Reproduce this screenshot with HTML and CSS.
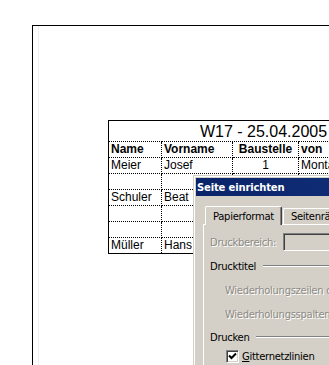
FILE: index.html
```html
<!DOCTYPE html>
<html lang="de">
<head>
  <meta charset="UTF-8">
  <title>Seite einrichten</title>
  <link rel="stylesheet" href="styles.css">
</head>
<body>
  <div class="sheet">
    <div class="sheet-inner">
      <table class="plan">
        <colgroup>
          <col class="c-name">
          <col class="c-vorname">
          <col class="c-baustelle">
          <col class="c-von">
        </colgroup>
        <tr class="title">
          <td colspan="4">W17 - 25.04.2005</td>
        </tr>
        <tr class="head">
          <td>Name</td>
          <td>Vorname</td>
          <td class="num">Baustelle</td>
          <td>von</td>
        </tr>
        <tr>
          <td>Meier</td>
          <td>Josef</td>
          <td class="num">1</td>
          <td>Montag</td>
        </tr>
        <tr><td></td><td></td><td></td><td></td></tr>
        <tr>
          <td>Schuler</td>
          <td>Beat</td>
          <td></td>
          <td></td>
        </tr>
        <tr><td></td><td></td><td></td><td></td></tr>
        <tr><td></td><td></td><td></td><td></td></tr>
        <tr>
          <td>Müller</td>
          <td>Hans</td>
          <td></td>
          <td></td>
        </tr>
      </table>
    </div>
  </div>

  <div class="dialog">
    <div class="titlebar">Seite einrichten</div>
    <div class="dlg-body">
      <div class="tabs">
        <div class="tab active">Papierformat</div>
        <div class="tab">Seitenränder</div>
      </div>
      <div class="panel">
        <div class="field">
          <span class="field-label disabled">Druckbereich:</span>
          <span class="textbox"></span>
        </div>
        <div class="group">
          <span>Drucktitel</span>
          <span class="rule"></span>
        </div>
        <div class="field option">
          <span class="disabled">Wiederholungszeilen oben:</span>
        </div>
        <div class="field option">
          <span class="disabled">Wiederholungsspalten links:</span>
        </div>
        <div class="group short">
          <span>Drucken</span>
          <span class="rule"></span>
        </div>
        <div class="check-row">
          <span class="checkbox">
            <svg width="9" height="9" viewBox="0 0 9 9">
              <polyline points="1,3.5 3.5,6 8,1.5" fill="none" stroke="#000" stroke-width="2"/>
            </svg>
          </span>
          <span class="check-label"><u>G</u>itternetzlinien</span>
        </div>
      </div>
    </div>
  </div>
</body>
</html>
```

FILE: styles.css
```css
body {
  margin: 0;
  background-color: #fff;
  overflow: hidden;
  font-family: "Liberation Sans", Arial, sans-serif;
  color: #000;
}

/* Blattrand der Druckvorschau */
.sheet {
  margin: 25px 0 0 32px;
  border-top: 1px solid #000;
  border-left: 1px solid #000;
  height: 360px;
}

.sheet-inner {
  margin-left: 5px;
  border-left: 1px solid #efefef;
  height: 100%;
  padding: 94px 0 0 69px;
  box-sizing: border-box;
}

.plan {
  border-collapse: collapse;
  table-layout: fixed;
  width: 310px;
  border: 1px solid #000;
  font-size: 12px;
}

.c-name { width: 53px; }
.c-vorname { width: 71px; }
.c-baustelle { width: 66px; }
.c-von { width: 120px; }

.plan td {
  border: 1px dotted #000;
  height: 15px;
  padding: 0 2px;
  line-height: 15px;
  white-space: nowrap;
  overflow: hidden;
}

.plan .title td {
  height: 20px;
  font-size: 16px;
  text-align: center;
}

.plan .head td {
  font-weight: bold;
}

.plan .num {
  text-align: center;
}

/* Dialog "Seite einrichten" */
.dialog {
  position: absolute;
  left: 193px;
  top: 175px;
  width: 420px;
  height: 240px;
  padding: 2px;
  background-color: #d4d0c8;
  border-top: 1px solid #d4d0c8;
  border-left: 1px solid #d4d0c8;
  box-shadow: inset 1px 1px 0 #fff;
  font-family: "DejaVu Sans", Tahoma, sans-serif;
  font-size: 10px;
  letter-spacing: -0.3px;
}

.titlebar {
  height: 18px;
  display: flex;
  align-items: center;
  padding-left: 1px;
  background: linear-gradient(to right, #0a246a, #12307a 50%, #2c5597);
  color: #fff;
  font-weight: bold;
  letter-spacing: -0.15px;
}

.dlg-body {
  padding: 10px 0 0 7px;
}

.tabs {
  display: flex;
  align-items: flex-end;
  padding-left: 2px;
}

.tab {
  height: 15px;
  display: flex;
  align-items: center;
  padding: 0 7px;
  border-top: 1px solid #fff;
  border-left: 1px solid #fff;
  border-right: 1px solid #404040;
  border-radius: 2px 2px 0 0;
  box-shadow: inset -1px 0 0 #808080;
  background-color: #d4d0c8;
  margin-left: 1px;
}

.tab.active {
  height: 18px;
  margin-left: 0;
  margin-bottom: -1px;
  position: relative;
  z-index: 1;
}

.panel {
  height: 200px;
  padding-top: 5px;
  border-top: 1px solid #fff;
  border-left: 1px solid #fff;
}

.field,
.group {
  display: flex;
  align-items: center;
  height: 24px;
  padding-left: 6px;
}

.field.option {
  padding-left: 21px;
}

.group.short {
  height: 22px;
}

.field-label {
  width: 73px;
}

.disabled {
  color: #8d8a84;
  text-shadow: 1px 1px 0 #fff;
}

.textbox {
  flex: 1;
  height: 18px;
  box-sizing: border-box;
  border: 1px solid;
  border-color: #808080 #fff #fff #808080;
  box-shadow: inset 1px 1px 0 #404040;
  background-color: #d4d0c8;
}

.rule {
  flex: 1;
  margin-left: 7px;
  border-top: 1px solid #808080;
  border-bottom: 1px solid #fff;
}

.check-row {
  display: flex;
  align-items: center;
  height: 16px;
  padding-left: 22px;
}

.checkbox {
  width: 13px;
  height: 13px;
  box-sizing: border-box;
  display: flex;
  align-items: center;
  justify-content: center;
  border: 1px solid;
  border-color: #808080 #fff #fff #808080;
  box-shadow: inset 1px 1px 0 #404040, inset -1px -1px 0 #d4d0c8;
  background-color: #fff;
}

.check-label {
  margin-left: 3px;
}
```
